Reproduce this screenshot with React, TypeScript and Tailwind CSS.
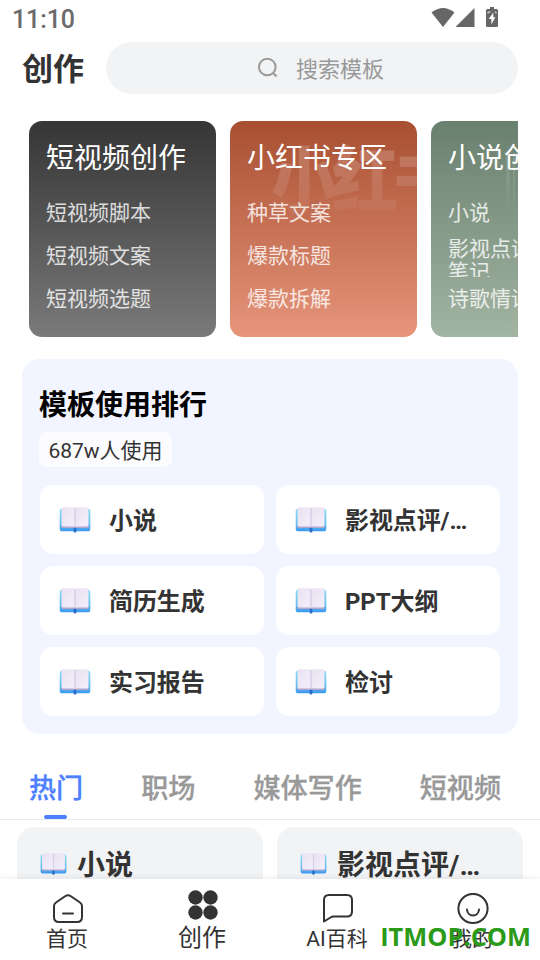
type TopicCard = {
  title: string;
  items: string[];
  bg: string;
  ghost?: string;
  bars?: boolean;
};

const TOPICS: TopicCard[] = [
  {
    title: "短视频创作",
    items: ["短视频脚本", "短视频文案", "短视频选题"],
    bg: "bg-linear-to-b from-[#363636] to-[#7a7a7a]",
  },
  {
    title: "小红书专区",
    items: ["种草文案", "爆款标题", "爆款拆解"],
    bg: "bg-linear-to-b from-[#a84f31] to-[#e6957b]",
    ghost: "小红书",
  },
  {
    title: "小说创作",
    items: ["小说", "影视点评/\n笔记", "诗歌情话"],
    bg: "bg-linear-to-b from-[#6a806f] to-[#a2b4a2]",
    bars: true,
  },
];

const RANKING = ["小说", "影视点评/…", "简历生成", "PPT大纲", "实习报告", "检讨"];

const TABS = ["热门", "职场", "媒体写作", "短视频"];

function BookIcon({ className }: { className: string }) {
  return (
    <svg viewBox="0 0 32 26" className={className}>
      <defs>
        <linearGradient id="cover" x1="0" y1="0" x2="0" y2="1">
          <stop offset="0" stopColor="#8fdcf2" />
          <stop offset="0.7" stopColor="#62bdee" />
          <stop offset="1" stopColor="#3a97f0" />
        </linearGradient>
        <linearGradient id="page" x1="0" y1="0" x2="1" y2="1">
          <stop offset="0" stopColor="#e9e2f1" />
          <stop offset="1" stopColor="#f4effc" />
        </linearGradient>
      </defs>
      <rect x="0.7" y="1.5" width="30.6" height="22.8" rx="2.6" fill="url(#cover)" />
      <rect x="2.2" y="18" width="27.6" height="3" rx="1.4" fill="#b3a5cc" />
      <path d="M4 .3H14.5Q16 .3 16 1.8V19.4H4Q2.5 19.4 2.5 18V1.8Q2.5.3 4 .3Z" fill="url(#page)" />
      <path d="M17.5.3H28Q29.5.3 29.5 1.8V18Q29.5 19.4 28 19.4H16V1.8Q16 .3 17.5.3Z" fill="url(#page)" />
      <path d="M15.3 1H16.700V20H15.3Z" fill="#d6cde6" />
      <rect x="14.6" y="20.8" width="2.8" height="4.8" rx="1" fill="#286ec9" />
    </svg>
  );
}

function StatusBar() {
  return (
    <div className="flex h-[42px] items-start justify-between pr-[42px] pl-3">
      <span className="pt-[6px] text-[25px] leading-[28px] font-medium tracking-[-0.1px] text-[#6b6b6b]">11:10</span>
      <div className="flex items-start pt-[7px]">
        <svg viewBox="0 0 24 20" className="h-5 w-6" fill="#666">
          <path d="M.5 5.500Q12-3.500 23.500 5.500L12 20Z" />
        </svg>
        <svg viewBox="0 0 20 20" className="mr-px h-5 w-5" fill="#666">
          <path d="M19.500 1V20H.5Z" />
        </svg>
        <svg viewBox="0 0 12 20" className="ml-[10px] h-5 w-3">
          <path d="M4 0H8V2H10.500Q12 2 12 3.500V18.500Q12 20 10.500 20H1.500Q0 20 0 18.500V3.500Q0 2 1.500 2H4Z" fill="#666" />
          <path d="M7.300 5.500 2.800 12H5.400V17.500L9.400 10.200H7.300Z" fill="#fff" />
          <path d="M2 5H4.500M2 5V6.500M9 5H10V6.500" fill="none" stroke="#fff" strokeWidth="0.8" />
        </svg>
      </div>
    </div>
  );
}

function Header() {
  return (
    <header className="flex h-[52px] items-center pr-[22px] pl-[22px]">
      <h1 className="w-[84px] shrink-0 pt-[4px] text-[31px] leading-[52px] font-bold text-[#333]">创作</h1>
      <div className="flex h-full flex-1 items-center rounded-full bg-[#f1f3f5] pl-[151px]">
        <svg viewBox="0 0 22 22" className="size-[22px]" fill="none" stroke="#999" strokeWidth="2">
          <circle cx="10.300" cy="10" r="8.300" />
          <path d="M16 16 19.500 19.500" />
        </svg>
        <span className="ml-[17px] pt-[3px] text-[22px] leading-[30px] text-[#999]">搜索模板</span>
      </div>
    </header>
  );
}

function Topic({ title, items, bg, ghost, bars }: TopicCard) {
  return (
    <div className={`relative h-[216px] w-[187px] shrink-0 overflow-hidden rounded-[13px] pt-[17px] pl-[17px] ${bg}`}>
      {ghost ? (
        <div className="absolute top-[19px] left-[41px] scale-y-110 bg-linear-to-b from-white/18 from-20% to-white/3 to-90% bg-clip-text text-[66px] leading-[86px] font-black tracking-[-5px] whitespace-nowrap text-transparent">
          {ghost}
        </div>
      ) : null}
      {bars ? (
        <div className="absolute top-[32px] left-[75px] flex h-[62px] gap-[3px]">
          <span className="w-[4px] bg-linear-to-b from-white/15 to-transparent" />
          <span className="w-[2px] bg-linear-to-b from-white/15 to-transparent" />
          <span className="w-[4px] bg-linear-to-b from-white/15 to-transparent" />
        </div>
      ) : null}
      <div className="relative text-[28px] leading-[42px] whitespace-nowrap text-white">{title}</div>
      <div className="relative mt-[12px]">
        {items.map((item) => (
          <div key={item} className="flex h-[43px] items-center">
            <div
              className={`overflow-hidden text-[21px] leading-[23px] whitespace-pre text-white/80 ${item.includes("\n") ? "h-[40px] pt-px" : "pb-px"}`}
            >
              {item}
            </div>
          </div>
        ))}
      </div>
    </div>
  );
}

function Ranking() {
  return (
    <section className="mx-[22px] mt-[22px] h-[375px] rounded-[18px] bg-[#f2f4ff] px-[18px] pt-[27px]">
      <h2 className="-ml-px text-[28px] leading-[40px] font-bold text-black">模板使用排行</h2>
      <div className="mt-[6px] -ml-px flex h-[35px] w-[133px] items-center justify-center rounded-[7px] bg-[#fcfcff] pt-[5px] text-[21px] text-[#333]">
        687w人使用
      </div>
      <div className="mt-[18px] grid grid-cols-2 gap-3">
        {RANKING.map((name) => (
          <div key={name} className="flex h-[69px] items-center rounded-[13px] bg-white pl-[19px]">
            <BookIcon className="h-[26px] w-8" />
            <span className="ml-[18px] pt-[3px] text-[24px] leading-[36px] font-bold tracking-[-0.1px] text-[#333]">{name}</span>
          </div>
        ))}
      </div>
    </section>
  );
}

function Tabs() {
  return (
    <div className="mt-[28px] h-[58px] border-b border-[#e8eaec]">
      <div className="flex w-[501px] gap-[58px] overflow-hidden pl-[29px]">
        {TABS.map((tab, i) => (
          <div key={tab} className="flex h-[57px] shrink-0 flex-col items-center justify-between">
            <span
              className={`pt-[7px] text-[27.100px] leading-[40px] font-medium [-webkit-text-stroke:0.3px] ${i === 0 ? "text-[#4d80ff]" : "text-[#999]"}`}
            >
              {tab}
            </span>
            {i === 0 ? <span className="mr-px h-1 w-[23px] rounded-[2px] bg-[#4d80ff]" /> : null}
          </div>
        ))}
      </div>
    </div>
  );
}

function NavBar() {
  return (
    <nav className="relative grid h-[81px] grid-cols-4 bg-white text-[21px] leading-[28px] text-[#333] shadow-[0_-2px_5px_rgba(0,0,0,0.06)]">
      <div className="flex flex-col items-center pt-[14px]">
        <svg viewBox="0 0 32 32" className="size-8" fill="none" stroke="#333" strokeWidth="2" strokeLinecap="round" strokeLinejoin="round">
          <path d="M4 9.500 13.500 3Q16 1.600 18.500 3L28 9.500Q30 11 30 13V24Q30 29 25 29H7Q2 29 2 24V13Q2 11 4 9.500Z" />
          <path d="M11 20.500H21" />
        </svg>
        <span className="mr-px">首页</span>
      </div>
      <div className="flex flex-col items-center pt-[11px]">
        <svg viewBox="0 0 30 30" className="size-[30px]" fill="#333">
          <circle cx="7.500" cy="7.500" r="7.200" />
          <circle cx="22.500" cy="7.500" r="7.200" />
          <circle cx="7.500" cy="22.500" r="7.200" />
          <circle cx="22.500" cy="22.500" r="7.200" />
        </svg>
        <span className="mr-px pt-[2px] text-[24px] leading-[32px]">创作</span>
      </div>
      <div className="flex flex-col items-center pt-[14px]">
        <svg viewBox="0 0 32 32" className="size-8" fill="none" stroke="#333" strokeWidth="2" strokeLinejoin="round">
          <path d="M2 28.500V7Q2 2 7 2H25Q30 2 30 7V18.500Q30 23.500 25 23.500H11.500Q10 23.500 8.500 24.500Z" />
        </svg>
        <span className="mr-px">AI百科</span>
      </div>
      <div className="flex flex-col items-center pt-[14px]">
        <svg viewBox="0 0 32 32" className="size-8" fill="none" stroke="#333" strokeWidth="2" strokeLinecap="round">
          <circle cx="16" cy="15.500" r="14.600" />
          <path d="M10 16.500C10.500 24.500 21.500 24.500 22 16.500" />
        </svg>
        <span className="mr-px">我的</span>
      </div>
      <div className="absolute right-[9px] bottom-[6px] font-['Open_Sans',sans-serif] text-[25.400px] leading-[36px] font-bold text-[#2a9a18]">
        ITMOP.COM
      </div>
    </nav>
  );
}

export default function App() {
  return (
    <div className="flex h-[960px] w-[540px] flex-col overflow-hidden bg-white font-[Roboto,'Noto_Sans_CJK_SC',sans-serif]">
      <StatusBar />
      <Header />
      <div className="mt-[27px] mr-[22px] ml-[29px] flex shrink-0 gap-[14px] overflow-hidden">
        {TOPICS.map((t) => (
          <Topic key={t.title} {...t} />
        ))}
      </div>
      <Ranking />
      <Tabs />
      {/* list continues under the nav bar */}
      <div className="grid h-[59px] shrink-0 grid-cols-2 gap-[14px] overflow-hidden px-[17px] pt-[7px]">
        {RANKING.slice(0, 2).map((name) => (
          <div key={name} className="flex h-[120px] items-start rounded-[17px] bg-[#f1f3f5] pl-[23px]">
            <BookIcon className="mt-[26px] h-[22px] w-[27px]" />
            <span className="ml-[10px] pt-[19px] text-[28px] leading-[40px] font-bold text-[#333]">{name}</span>
          </div>
        ))}
      </div>
      <NavBar />
    </div>
  );
}
